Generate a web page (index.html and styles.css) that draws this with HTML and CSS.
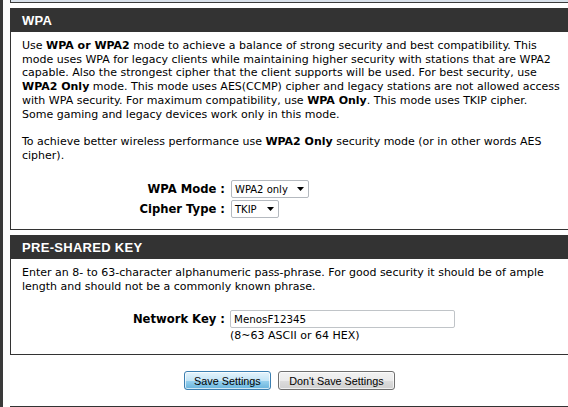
FILE: index.html
```html
<!DOCTYPE html>
<html>
<head>
<meta charset="utf-8">
<link rel="stylesheet" href="styles.css">
</head>
<body>
<div class="page">
  <div class="sidebar"></div>
  <div class="content">
    <div class="prev-box"></div>

    <div class="box">
      <h2 class="box-head">WPA</h2>
      <div class="box-body">
        <p>Use <b>WPA or WPA2</b> mode to achieve a balance of strong security and best compatibility. This<br>mode uses WPA for legacy clients while maintaining higher security with stations that are WPA2<br>capable. Also the strongest cipher that the client supports will be used. For best security, use<br><b>WPA2 Only</b> mode. This mode uses AES(CCMP) cipher and legacy stations are not allowed access<br>with WPA security. For maximum compatibility, use <b>WPA Only</b>. This mode uses TKIP cipher.<br>Some gaming and legacy devices work only in this mode.</p>
        <p>To achieve better wireless performance use <b>WPA2 Only</b> security mode (or in other words AES<br>cipher).</p>
        <div class="form form-wpa">
          <div class="form-row">
            <span class="label">WPA Mode :</span>
            <span class="select select-mode">WPA2 only<svg class="arrow" width="7" height="4" viewBox="0 0 7 4"><path d="M0 0H7L3.5 4Z" fill="#000"/></svg></span>
          </div>
          <div class="form-row">
            <span class="label">Cipher Type :</span>
            <span class="select select-cipher">TKIP<svg class="arrow" width="7" height="4" viewBox="0 0 7 4"><path d="M0 0H7L3.5 4Z" fill="#000"/></svg></span>
          </div>
        </div>
      </div>
    </div>

    <div class="box">
      <h2 class="box-head">PRE-SHARED KEY</h2>
      <div class="box-body">
        <p>Enter an 8- to 63-character alphanumeric pass-phrase. For good security it should be of ample<br>length and should not be a commonly known phrase.</p>
        <div class="form form-psk">
          <div class="form-row">
            <span class="label">Network Key :</span>
            <span class="input">MenosF12345</span>
          </div>
          <div class="form-hint">(8~63 ASCII or 64 HEX)</div>
        </div>
      </div>
    </div>

    <div class="actions">
      <button class="btn btn-primary">Save Settings</button>
      <button class="btn btn-secondary">Don't Save Settings</button>
    </div>
  </div>
</div>
</body>
</html>
```

FILE: styles.css
```css
html, body {
  margin: 0;
  padding: 0;
  background: #ffffff;
}

body {
  font-family: "DejaVu Sans", Verdana, sans-serif;
  font-size: 11px;
  color: #000;
  overflow: hidden;
}

.page {
  display: flex;
  min-height: 407px;
}

.sidebar {
  width: 3px;
  flex: none;
  background: #3a3a3a;
}

.content {
  flex: 1;
  padding: 0 1px 0 7px;
}

.prev-box {
  height: 2px;
  background: #d9e1ea;
  border: 1px solid #3c3c3c;
  border-top: none;
  margin-bottom: 5px;
}

.box {
  border: 1px solid #333333;
}

.box + .box {
  margin-top: 5px;
}

.box-head {
  margin: 0;
  height: 23px;
  line-height: 23px;
  background: #333333;
  color: #ffffff;
  font-family: "Liberation Sans", Arial, sans-serif;
  font-size: 13px;
  font-weight: bold;
  letter-spacing: 0.3px;
  padding-left: 11px;
}

.box-body {
  padding: 7px 8px 10px 11px;
}

.box-body p {
  margin: 0 0 13.7px;
  line-height: 13.7px;
  white-space: nowrap;
}

.form-wpa {
  padding-top: 3px;
}

.form-psk {
  padding: 2px 0 1px;
}

.form-row {
  display: flex;
  align-items: center;
  height: 20px;
}

.label {
  width: 203px;
  flex: none;
  text-align: right;
  font-weight: bold;
  font-size: 11.6px;
  margin-right: 6px;
}

.select {
  display: inline-flex;
  align-items: center;
  justify-content: space-between;
  box-sizing: border-box;
  height: 18px;
  border: 1px solid #b4b9bf;
  border-radius: 2px;
  background: #fff;
  font-size: 10px;
  padding: 0 4px 0 3px;
}

.select-mode {
  width: 78px;
}

.select-cipher {
  width: 48px;
}

.arrow {
  flex: none;
}

.input {
  display: inline-flex;
  align-items: center;
  box-sizing: border-box;
  width: 225px;
  height: 18px;
  border: 1px solid #c0c4c8;
  border-radius: 2px;
  padding-left: 3px;
  font-size: 10.3px;
  margin-left: -1px;
}

.form-hint {
  padding-left: 208px;
  line-height: 14px;
}

.actions {
  display: flex;
  justify-content: center;
  gap: 7px;
  padding: 16px 0;
  border-bottom: 1px solid #333333;
}

.btn {
  box-sizing: border-box;
  height: 19px;
  margin: 0;
  padding: 0 6px;
  font-family: "Liberation Sans", Arial, sans-serif;
  font-size: 10.8px;
  color: #000;
  border: 1px solid #707070;
  border-radius: 3px;
  background: linear-gradient(#f2f2f2 0%, #ebebeb 50%, #dddddd 51%, #cfcfcf 100%);
  box-shadow: inset 0 0 0 1px rgba(255,255,255,0.7);
}

.btn-primary {
  width: 87px;
  border-color: #3c7fb1;
  background: linear-gradient(#e5f4fc 0%, #c4e5f6 50%, #98d1ef 51%, #68b3db 100%);
}

.btn-secondary {
  width: 117px;
}
```
